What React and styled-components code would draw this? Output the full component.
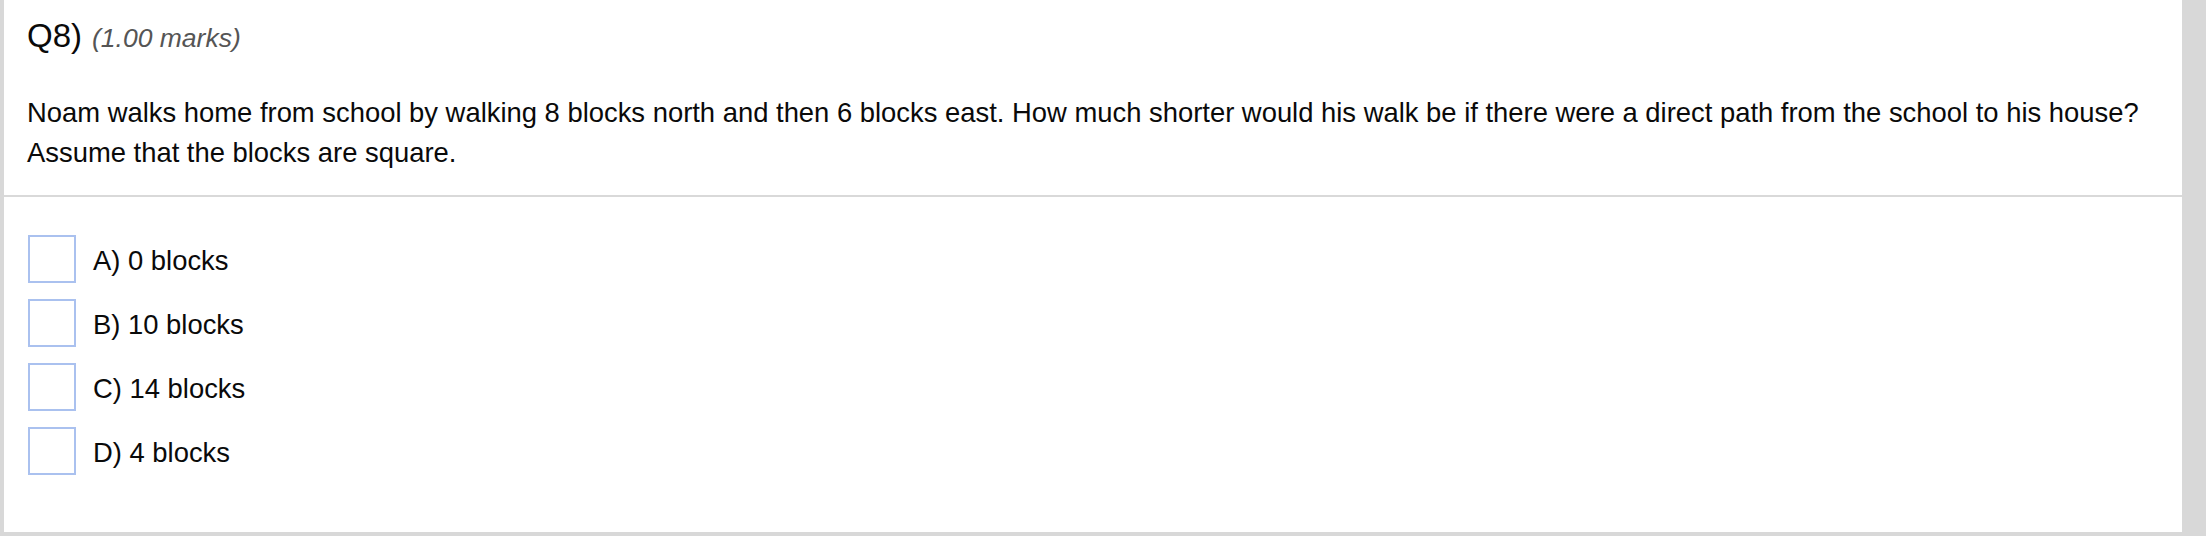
import React from "react";
import styled, { createGlobalStyle } from "styled-components";

const GlobalStyle = createGlobalStyle`
  html, body {
    margin: 0;
    padding: 0;
    background: #d8d8d8;
  }
  body {
    font-family: "Liberation Sans", Arial, Helvetica, sans-serif;
    color: #0a0a0a;
  }
`;

const Page = styled.div`
  display: flex;
  padding: 0 24px 4px 4px;
  min-height: 536px;
  box-sizing: border-box;
`;

const Card = styled.div`
  flex: 1;
  background: #fff;
  display: flex;
  flex-direction: column;
`;

const Header = styled.div`
  padding: 16px 23px 22px;
  border-bottom: 2px solid #d9d9d9;
`;

const Title = styled.h2`
  margin: 0;
  font-size: 33px;
  line-height: 40px;
  font-weight: 400;
  color: #0a0a0a;
`;

const Marks = styled.span`
  margin-left: 10px;
  font-size: 26.5px;
  font-style: italic;
  color: #555;
`;

const Question = styled.p`
  margin: 35px 0 0;
  font-size: 27.4px;
  line-height: 40px;
  color: #0a0a0a;
`;

const Options = styled.ul`
  list-style: none;
  margin: 0;
  padding: 38px 23px 57px 24px;
  display: flex;
  flex-direction: column;
  gap: 16px;
`;

const Option = styled.li`
  display: flex;
  align-items: center;
  height: 48px;
`;

const Box = styled.span`
  width: 48px;
  height: 48px;
  box-sizing: border-box;
  border: 2px solid #aac1ef;
  background: #fff;
  flex-shrink: 0;
`;

const Label = styled.span`
  margin-left: 17px;
  font-size: 27.4px;
  line-height: 40px;
  padding-top: 4px;
`;

const answers = ["A) 0 blocks", "B) 10 blocks", "C) 14 blocks", "D) 4 blocks"];

export default function App() {
  return (
    <>
      <GlobalStyle />
      <Page>
        <Card>
          <Header>
            <Title>
              Q8)<Marks>(1.00 marks)</Marks>
            </Title>
            <Question>
              Noam walks home from school by walking 8 blocks north and then 6
              blocks east. How much shorter would his walk be if there were a
              direct path from the school to his house? Assume that the blocks
              are square.
            </Question>
          </Header>
          <Options>
            {answers.map((a) => (
              <Option key={a}>
                <Box />
                <Label>{a}</Label>
              </Option>
            ))}
          </Options>
        </Card>
      </Page>
    </>
  );
}
